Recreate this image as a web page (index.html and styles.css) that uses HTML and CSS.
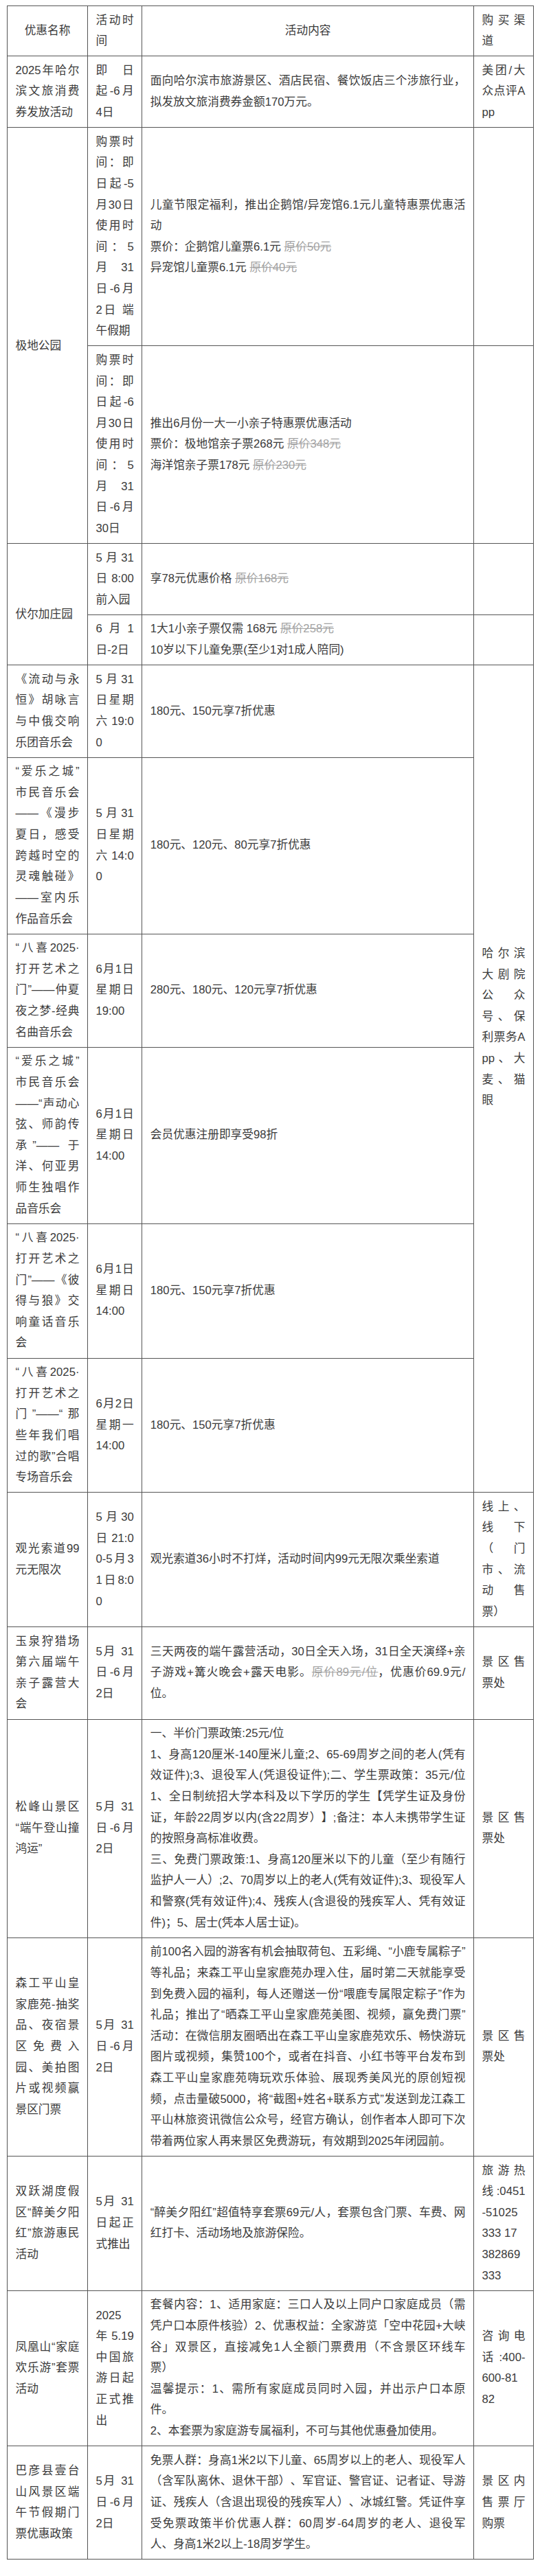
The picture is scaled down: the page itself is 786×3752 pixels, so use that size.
FILE: index.html
```html
<!DOCTYPE html>
<html lang="zh-CN">
<head>
<meta charset="utf-8">
<title>优惠活动</title>
<link rel="stylesheet" href="styles.css">
</head>
<body>
<div class="page">
<table class="deals">
<colgroup>
<col class="c-name"><col class="c-time"><col class="c-body"><col class="c-buy">
</colgroup>
<tbody>
<tr>
<td class="center">优惠名称</td>
<td>活动时间</td>
<td class="center">活动内容</td>
<td>购买渠道</td>
</tr>
<tr>
<td>2025年哈尔滨文旅消费券发放活动</td>
<td>即日起-6月4日</td>
<td>面向哈尔滨市旅游景区、酒店民宿、餐饮饭店三个涉旅行业，拟发放文旅消费券金额170万元。</td>
<td>美团/大众点评App</td>
</tr>
<tr>
<td rowspan="2"><br>极地公园</td>
<td>购票时间：即日起-5月30日使用时间：5月 31日-6月2日 端午假期</td>
<td>儿童节限定福利，推出企鹅馆/异宠馆6.1元儿童特惠票优惠活动<br>票价：企鹅馆儿童票6.1元 <span class="was">原价50元</span><br>异宠馆儿童票6.1元 <span class="was">原价40元</span></td>
<td></td>
</tr>
<tr>
<td>购票时间：即日起-6月30日使用时间：5月 31日-6月30日</td>
<td>推出6月份一大一小亲子特惠票优惠活动<br>票价：极地馆亲子票268元 <span class="was">原价348元</span><br>海洋馆亲子票178元 <span class="was">原价230元</span></td>
<td></td>
</tr>
<tr>
<td rowspan="2"><br>伏尔加庄园</td>
<td>5月31日8:00前入园</td>
<td>享78元优惠价格 <span class="was">原价168元</span></td>
<td></td>
</tr>
<tr>
<td>6月1日-2日</td>
<td>1大1小亲子票仅需 168元 <span class="was">原价258元</span><br>10岁以下儿童免票(至少1对1成人陪同)</td>
<td></td>
</tr>
<tr>
<td>《流动与永恒》胡咏言与中俄交响乐团音乐会</td>
<td>5月31日星期六19:00</td>
<td>180元、150元享7折优惠</td>
<td rowspan="6" class="lift">哈尔滨大剧院公众号、保利票务App、大麦、猫眼</td>
</tr>
<tr>
<td>“爱乐之城”市民音乐会——《漫步夏日，感受跨越时空的灵魂触碰》——室内乐作品音乐会</td>
<td>5月31日星期六14:00</td>
<td>180元、120元、80元享7折优惠</td>
</tr>
<tr>
<td>“八喜2025·打开艺术之门”——仲夏夜之梦-经典名曲音乐会</td>
<td>6月1日星期日19:00</td>
<td>280元、180元、120元享7折优惠</td>
</tr>
<tr>
<td>“爱乐之城”市民音乐会——“声动心弦、师韵传承”—— 于洋、何亚男师生独唱作品音乐会</td>
<td>6月1日星期日14:00</td>
<td>会员优惠注册即享受98折</td>
</tr>
<tr>
<td>“八喜2025·打开艺术之门”——《彼得与狼》交响童话音乐会</td>
<td>6月1日星期日14:00</td>
<td>180元、150元享7折优惠</td>
</tr>
<tr>
<td>“八喜2025·打开艺术之门”——“那些年我们唱过的歌”合唱专场音乐会</td>
<td>6月2日星期一14:00</td>
<td>180元、150元享7折优惠</td>
</tr>
<tr>
<td>观光索道99元无限次</td>
<td>5月30日21:00-5月31日8:00</td>
<td>观光索道36小时不打烊，活动时间内99元无限次乘坐索道</td>
<td>线上、线下（门市、流动售票）</td>
</tr>
<tr>
<td>玉泉狩猎场第六届端午亲子露营大会</td>
<td>5月 31日-6月2日</td>
<td>三天两夜的端午露营活动，30日全天入场，31日全天演绎+亲子游戏+篝火晚会+露天电影。<span class="was">原价89元/位</span>，优惠价69.9元/位。</td>
<td>景区售票处</td>
</tr>
<tr>
<td>松峰山景区“端午登山撞鸿运”</td>
<td>5月 31日-6月2日</td>
<td>一、半价门票政策:25元/位<br>1、身高120厘米-140厘米儿童;2、65-69周岁之间的老人(凭有效证件);3、退役军人(凭退役证件);二、学生票政策：35元/位1、全日制统招大学本科及以下学历的学生【凭学生证及身份证，年龄22周岁以内(含22周岁）】;备注：本人未携带学生证的按照身高标准收费。<br>三、免费门票政策:1、身高120厘米以下的儿童（至少有随行监护人一人）;2、70周岁以上的老人(凭有效证件);3、现役军人和警察(凭有效证件);4、残疾人(含退役的残疾军人、凭有效证件)；5、居士(凭本人居士证)。</td>
<td>景区售票处</td>
</tr>
<tr>
<td>森工平山皇家鹿苑-抽奖品、夜宿景区免费入园、美拍图片或视频赢景区门票</td>
<td>5月 31日-6月2日</td>
<td>前100名入园的游客有机会抽取荷包、五彩绳、“小鹿专属粽子”等礼品；来森工平山皇家鹿苑办理入住，届时第二天就能享受到免费入园的福利，每人还赠送一份“喂鹿专属限定粽子”作为礼品；推出了“晒森工平山皇家鹿苑美图、视频，赢免费门票”活动：在微信朋友圈晒出在森工平山皇家鹿苑欢乐、畅快游玩图片或视频，集赞100个，或者在抖音、小红书等平台发布到森工平山皇家鹿苑嗨玩欢乐体验、展现秀美风光的原创短视频，点击量破5000，将“截图+姓名+联系方式”发送到龙江森工平山林旅资讯微信公众号，经官方确认，创作者本人即可下次带着两位家人再来景区免费游玩，有效期到2025年闭园前。</td>
<td>景区售票处</td>
</tr>
<tr>
<td>双跃湖度假区“醉美夕阳红”旅游惠民活动</td>
<td>5月 31日起正式推出</td>
<td>“醉美夕阳红”超值特享套票69元/人，套票包含门票、车费、网红打卡、活动场地及旅游保险。</td>
<td>旅游热线:0451-51025 333 17<br>382869333</td>
</tr>
<tr>
<td>凤凰山“家庭欢乐游”套票活动</td>
<td>2025 年5.19中国旅游日起正式推出</td>
<td>套餐内容：1、适用家庭：三口人及以上同户口家庭成员（需凭户口本原件核验）2、优惠权益：全家游览「空中花园+大峡谷」双景区，直接减免1人全额门票费用（不含景区环线车票）<br>温馨提示：1、需所有家庭成员同时入园，并出示户口本原件。<br>2、本套票为家庭游专属福利，不可与其他优惠叠加使用。</td>
<td>咨询电话:400-600-81 82</td>
</tr>
<tr>
<td>巴彦县壹台山风景区端午节假期门票优惠政策</td>
<td>5月 31日-6月2日</td>
<td>免票人群：身高1米2以下儿童、65周岁以上的老人、现役军人（含军队离休、退休干部）、军官证、警官证、记者证、导游证、残疾人（含退出现役的残疾军人）、冰城红警。凭证件享受免票政策半价优惠人群：60周岁-64周岁的老人、退役军人、身高1米2以上-18周岁学生。</td>
<td>景区内售票厅购票</td>
</tr>
</tbody>
</table>
<div class="rule"></div>
</div>
</body>
</html>
```

FILE: styles.css
```css
html, body {
  margin: 0;
  padding: 0;
  background: #ffffff;
}

body {
  font-family: "Liberation Sans", "Noto Sans CJK SC", sans-serif;
  color: #3b3b3b;
}

.page {
  padding: 8px 10px 0 10px;
}

.deals {
  border-collapse: collapse;
  table-layout: fixed;
  width: 766px;
  font-size: 16.7px;
  line-height: 30.62px;
  text-spacing-trim: space-all;
}

.c-name { width: 117px; }
.c-time { width: 79.3px; }
.c-body { width: 482.7px; }
.c-buy  { width: 87px; }

.deals td {
  border: 1px solid #555555;
  padding: 5.5px 11.5px;
  vertical-align: middle;
  text-align: justify;
  word-break: break-all;
}

.deals td.center {
  text-align: center;
}

.deals td.lift {
  padding-bottom: 155px;
}

.was {
  color: #a3a3a3;
  text-decoration: line-through;
}

.rule {
  margin-top: 43px;
  height: 1px;
  background: #ececec;
}
```
